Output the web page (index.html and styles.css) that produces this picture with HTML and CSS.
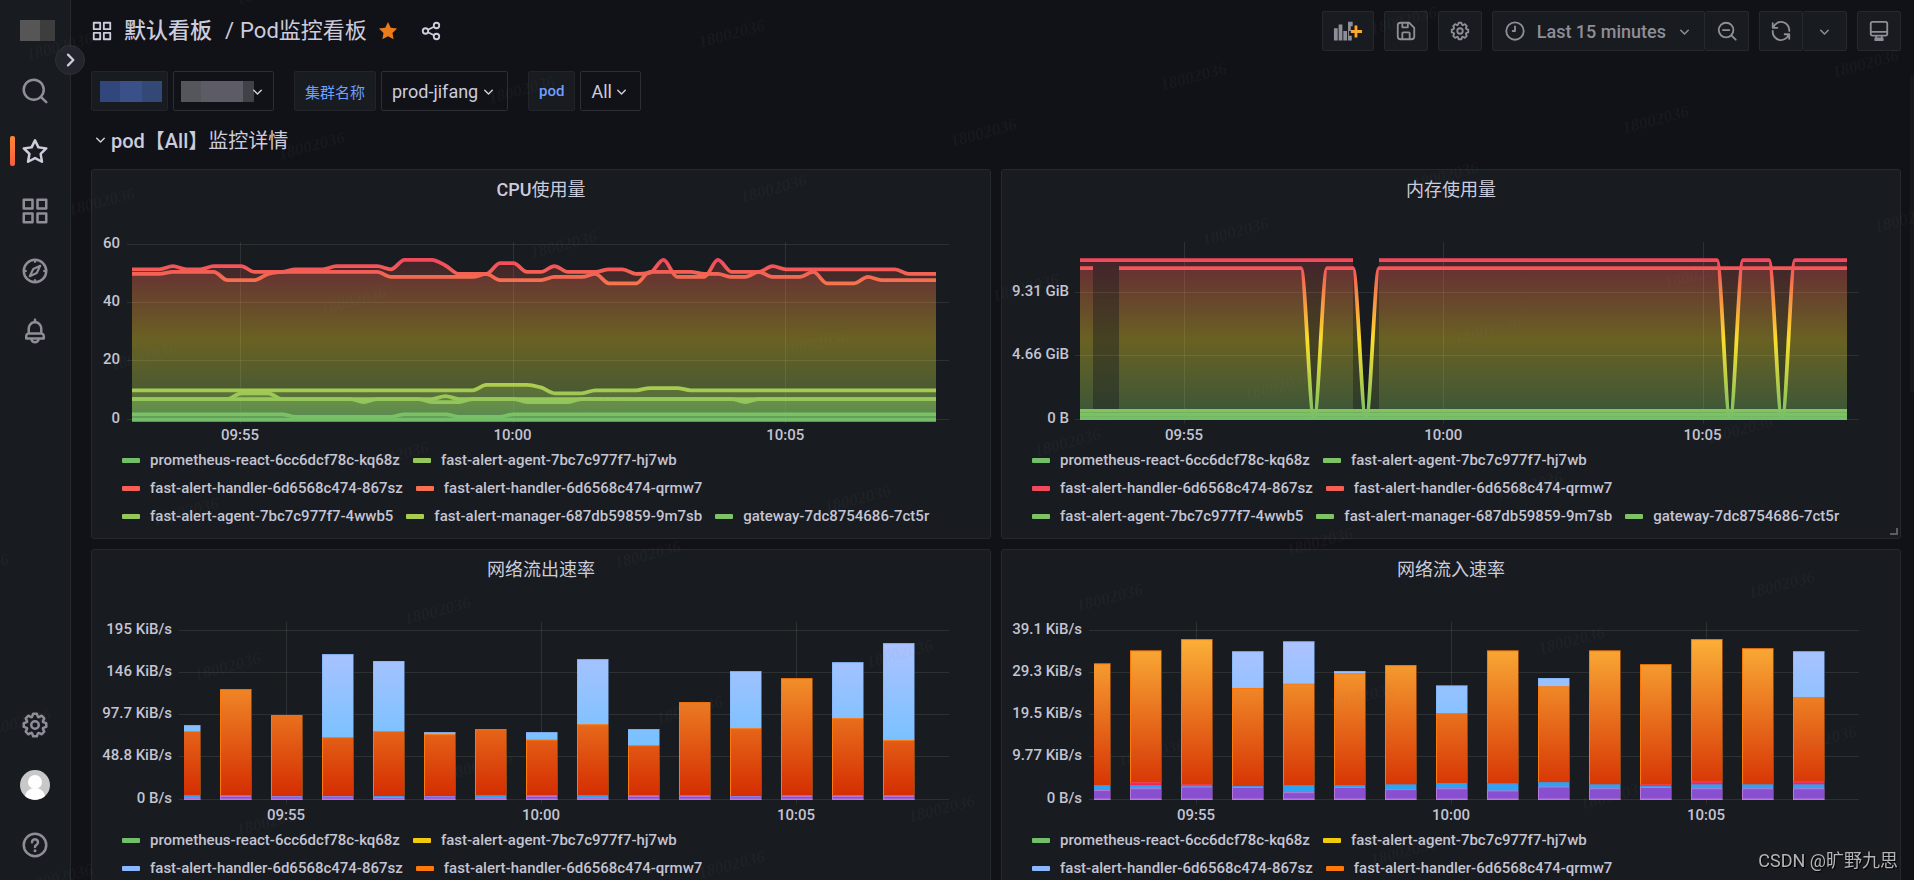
FILE: index.html
```html
<!DOCTYPE html>
<html lang="zh-CN">
<head>
<meta charset="utf-8">
<title>Pod监控看板</title>
<link rel="stylesheet" href="styles.css">
</head>
<body>
<svg class="sprite" aria-hidden="true">
  <symbol id="i-search" viewBox="0 0 24 24"><path d="M21.71,20.29,18,16.61A9,9,0,1,0,16.61,18l3.68,3.68a1,1,0,0,0,1.42,0A1,1,0,0,0,21.71,20.29ZM11,18a7,7,0,1,1,7-7A7,7,0,0,1,11,18Z"/></symbol>
  <symbol id="i-star" viewBox="0 0 24 24"><path d="M22,9.67A1,1,0,0,0,21.14,9l-5.69-.83L12.9,3a1,1,0,0,0-1.8,0L8.55,8.16,2.86,9a1,1,0,0,0-.81.68,1,1,0,0,0,.25,1l4.13,4-1,5.68A1,1,0,0,0,6.9,21.44L12,18.77l5.1,2.67a.93.93,0,0,0,.46.12,1,1,0,0,0,.59-.19,1,1,0,0,0,.4-1l-1-5.68,4.13-4A1,1,0,0,0,22,9.67Zm-6.15,4a1,1,0,0,0-.29.88l.72,4.2-3.76-2a1.06,1.06,0,0,0-.94,0l-3.76,2,.72-4.2a1,1,0,0,0-.29-.88l-3-3,4.21-.61a1,1,0,0,0,.76-.55L12,5.7l1.88,3.82a1,1,0,0,0,.76.55l4.21.61Z"/></symbol>
  <symbol id="i-star-full" viewBox="0 0 24 24"><path d="M12 2.2l3 6.2 6.9 1-5 4.8 1.2 6.9-6.1-3.3-6.1 3.3 1.2-6.9-5-4.8 6.9-1z"/></symbol>
  <symbol id="i-apps" viewBox="0 0 24 24"><path d="M10,13H3a1,1,0,0,0-1,1v7a1,1,0,0,0,1,1h7a1,1,0,0,0,1-1V14A1,1,0,0,0,10,13ZM9,20H4V15H9ZM21,2H14a1,1,0,0,0-1,1v7a1,1,0,0,0,1,1h7a1,1,0,0,0,1-1V3A1,1,0,0,0,21,2ZM20,9H15V4h5Zm1,4H14a1,1,0,0,0-1,1v7a1,1,0,0,0,1,1h7a1,1,0,0,0,1-1V14A1,1,0,0,0,21,13Zm-1,7H15V15h5ZM10,2H3A1,1,0,0,0,2,3v7a1,1,0,0,0,1,1h7a1,1,0,0,0,1-1V3A1,1,0,0,0,10,2ZM9,9H4V4H9Z"/></symbol>
  <symbol id="i-compass" viewBox="0 0 24 24"><g fill="none" stroke="currentColor" stroke-width="2" stroke-linejoin="round"><circle cx="12" cy="12" r="9"/><path d="M12 3v2.4M12 18.6V21M3 12h2.4M18.6 12H21M16.2 7.8l-5.6 2.6-2.8 5.8 5.6-2.6z" stroke-width="1.7"/></g></symbol>
  <symbol id="i-bell" viewBox="0 0 24 24"><path d="M18,13.18V10a6,6,0,0,0-5-5.91V3a1,1,0,0,0-2,0V4.09A6,6,0,0,0,6,10v3.18A3,3,0,0,0,4,16v2a1,1,0,0,0,1,1H8.14a4,4,0,0,0,7.72,0H19a1,1,0,0,0,1-1V16A3,3,0,0,0,18,13.18ZM8,10a4,4,0,0,1,8,0v3H8Zm4,10a2,2,0,0,1-1.72-1h3.44A2,2,0,0,1,12,20Zm6-3H6V16a1,1,0,0,1,1-1H17a1,1,0,0,1,1,1Z"/></symbol>
  <symbol id="i-cog" viewBox="0 0 24 24"><path d="M21.32,9.55l-1.89-.63.89-1.78A1,1,0,0,0,20.13,6L18,3.87a1,1,0,0,0-1.15-.19l-1.78.89-.63-1.89A1,1,0,0,0,13.5,2h-3a1,1,0,0,0-.95.68L8.92,4.57,7.14,3.68A1,1,0,0,0,6,3.87L3.87,6a1,1,0,0,0-.19,1.15l.89,1.78-1.89.63A1,1,0,0,0,2,10.5v3a1,1,0,0,0,.68.95l1.89.63-.89,1.78A1,1,0,0,0,3.87,18L6,20.13a1,1,0,0,0,1.15.19l1.78-.89.63,1.89a1,1,0,0,0,.95.68h3a1,1,0,0,0,.95-.68l.63-1.89,1.78.89A1,1,0,0,0,18,20.13L20.13,18a1,1,0,0,0,.19-1.15l-.89-1.78,1.89-.63A1,1,0,0,0,22,13.5v-3A1,1,0,0,0,21.32,9.55ZM20,12.78l-1.2.4A2,2,0,0,0,17.64,16l.57,1.14-1.1,1.1L16,17.64a2,2,0,0,0-2.79,1.16l-.4,1.2H11.22l-.4-1.2A2,2,0,0,0,8,17.64l-1.14.57-1.1-1.1L6.36,16A2,2,0,0,0,5.2,13.18L4,12.78V11.22l1.2-.4A2,2,0,0,0,6.36,8L5.79,6.89l1.1-1.1L8,6.36A2,2,0,0,0,10.82,5.2l.4-1.2h1.56l.4,1.2A2,2,0,0,0,16,6.36l1.14-.57,1.1,1.1L17.64,8a2,2,0,0,0,1.16,2.79l1.2.4ZM12,8a4,4,0,1,0,4,4A4,4,0,0,0,12,8Zm0,6a2,2,0,1,1,2-2A2,2,0,0,1,12,14Z"/></symbol>
  <symbol id="i-help" viewBox="0 0 24 24"><g fill="none" stroke="currentColor" stroke-width="2" stroke-linecap="round"><circle cx="12" cy="12" r="9"/><path d="M9.6 9.8a2.4 2.4 0 1 1 3.6 2.1c-.8.4-1.2.9-1.2 1.6"/></g><circle cx="12" cy="16.6" r="1.2"/></symbol>
  <symbol id="i-share" viewBox="0 0 24 24"><g fill="none" stroke="currentColor" stroke-width="2"><circle cx="6" cy="12" r="3"/><circle cx="18" cy="6" r="3"/><circle cx="18" cy="18" r="3"/><path d="M8.7 10.7l6.6-3.4M8.7 13.3l6.6 3.4"/></g></symbol>
  <symbol id="i-down" viewBox="0 0 24 24"><path d="M6 10l6 6 6-6" fill="none" stroke="currentColor" stroke-width="2.4" stroke-linecap="round" stroke-linejoin="round"/></symbol>
  <symbol id="i-right" viewBox="0 0 24 24"><path d="M9 4l8 8-8 8" fill="none" stroke="currentColor" stroke-width="3.4" stroke-linecap="round" stroke-linejoin="round"/></symbol>
  <symbol id="i-add-panel" viewBox="0 0 32 24"><path d="M1 9h4v13H1zM6 5h4v17H6zM11 12h4v10h-4zM16 2h5v5h-2v5h-2v5h3v5h-4z"/><path d="M23 6h3v5h5v3h-5v5h-3v-5h-4v-3h4z" fill="#ffa62b"/></symbol>
  <symbol id="i-save" viewBox="0 0 24 24"><g fill="none" stroke="currentColor" stroke-width="2" stroke-linejoin="round"><path d="M3 6a3 3 0 0 1 3-3h9.5L21 8.500V18a3 3 0 0 1-3 3H6a3 3 0 0 1-3-3zM8 3v5h6V3M8 21v-6.500a1 1 0 0 1 1-1h6a1 1 0 0 1 1 1V21"/></g></symbol>
  <symbol id="i-clock" viewBox="0 0 24 24"><g fill="none" stroke="currentColor" stroke-width="2" stroke-linecap="round" stroke-linejoin="round"><circle cx="12" cy="12" r="9.500"/><path d="M12 7v5H9.500"/></g></symbol>
  <symbol id="i-zoom-out" viewBox="0 0 24 24"><g fill="none" stroke="currentColor" stroke-width="2" stroke-linecap="round"><circle cx="11" cy="11" r="8"/><path d="M17 17l4.500 4.500M7.500 11h7"/></g></symbol>
  <symbol id="i-sync" viewBox="0 0 24 24"><g fill="none" stroke="currentColor" stroke-width="2" stroke-linecap="round" stroke-linejoin="round"><path d="M3 3.500v5h5M3.600 8a9 9 0 0 1 17.400 4M21 20.500v-5h-5M20.400 16A9 9 0 0 1 3 12"/></g></symbol>
  <symbol id="i-monitor" viewBox="0 0 24 24"><g fill="none" stroke="currentColor" stroke-width="2" stroke-linejoin="round"><rect x="3" y="2" width="18" height="15" rx="2"/><path d="M3 13h18M9 17v2M15 17v2M8 20h8v2H8z"/></g></symbol>
</svg>

<div class="app">
  <nav class="sidebar" aria-label="主导航">
    <div class="side-group">
      <a class="logo" href="#" aria-label="首页"></a>
      <a class="side-item" href="#" aria-label="搜索"><svg><use href="#i-search"/></svg></a>
      <a class="side-item active" href="#" aria-label="收藏"><svg><use href="#i-star"/></svg></a>
      <a class="side-item" href="#" aria-label="看板"><svg><use href="#i-apps"/></svg></a>
      <a class="side-item" href="#" aria-label="探索"><svg><use href="#i-compass"/></svg></a>
      <a class="side-item" href="#" aria-label="告警"><svg><use href="#i-bell"/></svg></a>
    </div>
    <div class="side-group">
      <a class="side-item" href="#" aria-label="设置"><svg><use href="#i-cog"/></svg></a>
      <a class="side-item" href="#" aria-label="用户"><svg class="avatar" viewBox="0 0 30 30"><circle cx="15" cy="15" r="15" fill="#c8c8c8"/><circle cx="15" cy="12" r="7" fill="#fff"/><path d="M5 26c1-5 5-8 10-8s9 3 10 8a15 15 0 0 1-20 0z" fill="#fff"/></svg></a>
      <a class="side-item" href="#" aria-label="帮助"><svg><use href="#i-help"/></svg></a>
    </div>
    <button class="side-toggle" aria-label="展开菜单"><svg><use href="#i-right"/></svg></button>
  </nav>

  <main class="main">
    <header class="navbar">
      <div class="crumbs">
        <svg class="icon"><use href="#i-apps"/></svg>
        <h1 class="title"><a class="folder" href="#">默认看板</a><span class="slash">/</span><a href="#">Pod监控看板</a></h1>
        <button class="plain starred" aria-label="取消收藏"><svg><use href="#i-star-full"/></svg></button>
        <button class="plain" aria-label="分享"><svg class="icon"><use href="#i-share"/></svg></button>
      </div>
      <div class="toolbar">
        <button class="tool wide" aria-label="添加面板"><svg class="add-icon"><use href="#i-add-panel"/></svg></button>
        <button class="tool" aria-label="保存"><svg class="icon"><use href="#i-save"/></svg></button>
        <button class="tool" aria-label="看板设置"><svg class="icon"><use href="#i-cog"/></svg></button>
        <div class="tool-group">
          <button class="tool time"><svg class="icon"><use href="#i-clock"/></svg><span>Last 15 minutes</span><svg class="chevron"><use href="#i-down"/></svg></button>
          <button class="tool" aria-label="缩小时间范围"><svg class="icon"><use href="#i-zoom-out"/></svg></button>
        </div>
        <div class="tool-group">
          <button class="tool" aria-label="刷新"><svg class="icon"><use href="#i-sync"/></svg></button>
          <button class="tool" aria-label="刷新间隔"><svg class="chevron"><use href="#i-down"/></svg></button>
        </div>
        <button class="tool" aria-label="电视模式"><svg class="icon"><use href="#i-monitor"/></svg></button>
      </div>
    </header>

    <div class="variables">
      <div class="variable">
        <span class="var-label"><span class="mask mask-blue"></span></span>
        <button class="var-masked" aria-label="变量"><span class="mask mask-gray"></span><svg class="chevron"><use href="#i-down"/></svg></button>
      </div>
      <div class="variable">
        <label class="var-label cjk" for="v-cluster">集群名称</label>
        <div class="var-select"><select id="v-cluster"><option>prod-jifang</option></select><svg class="chevron"><use href="#i-down"/></svg></div>
      </div>
      <div class="variable">
        <label class="var-label" for="v-pod">pod</label>
        <div class="var-select"><select id="v-pod"><option>All</option></select><svg class="chevron"><use href="#i-down"/></svg></div>
      </div>
    </div>

    <button class="row-title"><svg class="chevron"><use href="#i-down"/></svg><span>pod【All】<span class="cjk">监控详情</span></span></button>

    <div class="panels">
      <section class="panel">
        <h2>CPU<span class="cjk">使用量</span></h2>
        <div class="chart" data-chart="cpu"></div>
        <ul class="legend">
          <li><i class="c-green"></i>prometheus-react-6cc6dcf78c-kq68z</li>
          <li><i class="c-lime"></i>fast-alert-agent-7bc7c977f7-hj7wb</li>
          <li><i class="c-red"></i>fast-alert-handler-6d6568c474-867sz</li>
          <li><i class="c-coral"></i>fast-alert-handler-6d6568c474-qrmw7</li>
          <li><i class="c-lime"></i>fast-alert-agent-7bc7c977f7-4wwb5</li>
          <li><i class="c-olive"></i>fast-alert-manager-687db59859-9m7sb</li>
          <li><i class="c-leaf"></i>gateway-7dc8754686-7ct5r</li>
        </ul>
      </section>
      <section class="panel">
        <h2 class="cjk">内存使用量</h2>
        <div class="chart" data-chart="memory"></div>
        <ul class="legend">
          <li><i class="c-green"></i>prometheus-react-6cc6dcf78c-kq68z</li>
          <li><i class="c-leaf"></i>fast-alert-agent-7bc7c977f7-hj7wb</li>
          <li><i class="c-rose"></i>fast-alert-handler-6d6568c474-867sz</li>
          <li><i class="c-red"></i>fast-alert-handler-6d6568c474-qrmw7</li>
          <li><i class="c-leaf"></i>fast-alert-agent-7bc7c977f7-4wwb5</li>
          <li><i class="c-leaf"></i>fast-alert-manager-687db59859-9m7sb</li>
          <li><i class="c-leaf"></i>gateway-7dc8754686-7ct5r</li>
        </ul>
        <span class="resize"></span>
      </section>
      <section class="panel">
        <h2 class="cjk">网络流出速率</h2>
        <div class="chart" data-chart="netOut"></div>
        <ul class="legend">
          <li><i class="c-green"></i>prometheus-react-6cc6dcf78c-kq68z</li>
          <li><i class="c-yellow"></i>fast-alert-agent-7bc7c977f7-hj7wb</li>
          <li><i class="c-blue"></i>fast-alert-handler-6d6568c474-867sz</li>
          <li><i class="c-orange"></i>fast-alert-handler-6d6568c474-qrmw7</li>
        </ul>
      </section>
      <section class="panel">
        <h2 class="cjk">网络流入速率</h2>
        <div class="chart" data-chart="netIn"></div>
        <ul class="legend">
          <li><i class="c-green"></i>prometheus-react-6cc6dcf78c-kq68z</li>
          <li><i class="c-yellow"></i>fast-alert-agent-7bc7c977f7-hj7wb</li>
          <li><i class="c-blue"></i>fast-alert-handler-6d6568c474-867sz</li>
          <li><i class="c-orange"></i>fast-alert-handler-6d6568c474-qrmw7</li>
        </ul>
      </section>
    </div>
  </main>
</div>
<div class="scroll-thumb"></div>
<svg class="user-marks" aria-hidden="true"></svg>
<div class="credit">CSDN @旷野九思</div>
<script src="charts.js"></script>
</body>
</html>
```

FILE: styles.css
```css
* { box-sizing: border-box; }

body {
  margin: 0;
  height: 100vh;
  overflow: hidden;
  background: #111217;
  color: #ccccdc;
  font-family: Roboto, "Noto Sans CJK SC", sans-serif;
  font-size: 15px;
}

a { color: inherit; text-decoration: none; }
button, select { font: inherit; color: inherit; cursor: pointer; }
svg { fill: currentColor; display: block; }
.sprite { display: none; }
.icon { width: 22px; height: 22px; }
.chevron { width: 15px; height: 15px; }

.app { display: flex; height: 100vh; }

/* sidebar */
.sidebar {
  position: relative;
  flex: none;
  width: 71px;
  display: flex;
  flex-direction: column;
  justify-content: space-between;
  padding: 20px 0 5px;
  background: #181b1f;
  border-right: 1px solid #26282d;
  color: #8e8e99;
}
.side-group { display: flex; flex-direction: column; }
.logo {
  width: 35px;
  height: 21px;
  margin: 0 0 20px 20px;
  background: linear-gradient(90deg, #565656 20px, #3d3d3e 20px);
}
.side-item {
  position: relative;
  height: 60px;
  display: flex;
  align-items: center;
  justify-content: center;
}
.side-item svg { width: 30px; height: 30px; }
.side-item.active { color: #ccccdc; }
.side-item.active::before {
  content: "";
  position: absolute;
  left: 10px;
  top: 15px;
  width: 5px;
  height: 30px;
  border-radius: 2px;
  background: linear-gradient(#ff8833, #f55f3e);
}
.side-toggle {
  position: absolute;
  z-index: 2;
  right: -15px;
  top: 45px;
  width: 30px;
  height: 30px;
  padding: 0;
  border: 1px solid #2d3036;
  border-radius: 50%;
  background: #22252b;
  color: #ccccdc;
  display: flex;
  align-items: center;
  justify-content: center;
}
.side-toggle svg { width: 16px; height: 16px; }

/* header */
.main { flex: 1; min-width: 0; padding: 0 13px 0 20px; }
.navbar {
  display: flex;
  align-items: center;
  justify-content: space-between;
  height: 62px;
}
.crumbs { display: flex; align-items: center; }
.title {
  display: flex;
  margin: 0 10px 0 11px;
  font-size: 22px;
  line-height: 30px;
  font-weight: 400;
}
.folder { font-weight: 500; }
.slash { margin: 0 6px 0 13px; }
.plain {
  padding: 0;
  border: 0;
  background: none;
  margin-right: 21px;
}
.starred { color: #eb7b18; }
.starred svg { width: 22px; height: 22px; }

.toolbar { display: flex; gap: 10px; color: #8e8e99; }
.tool {
  min-width: 44px;
  height: 40px;
  padding: 0 10px;
  display: flex;
  align-items: center;
  justify-content: center;
  background: #181b1f;
  border: 1px solid #26282d;
  border-radius: 2px;
}
.tool.wide { width: 52px; }
.add-icon { width: 32px; height: 24px; }
.tool-group { display: flex; }
.tool-group .tool + .tool { border-left: 0; }
.tool.time {
  gap: 11px;
  padding: 0 12px 0 11px;
  font-size: 18px;
  font-weight: 500;
}

/* template variables */
.variables { display: flex; gap: 20px; padding-top: 9px; }
.variable { display: flex; gap: 5px; }
.var-label {
  height: 40px;
  padding: 0 10px;
  display: flex;
  align-items: center;
  background: #181b1f;
  border: 1px solid #222429;
  border-radius: 2px;
  color: #6e9fff;
  font-size: 15px;
  font-weight: 500;
}
.var-select, .var-masked {
  position: relative;
  height: 40px;
  display: flex;
  align-items: center;
  background: #111217;
  border: 1px solid #2d2e34;
  border-radius: 2px;
}
.var-select select {
  appearance: none;
  height: 38px;
  padding: 0 28px 0 10px;
  border: 0;
  background: none;
  font-size: 18px;
}
.var-select .chevron {
  position: absolute;
  right: 11px;
  pointer-events: none;
}
.var-masked { padding: 0 8px 0 7px; }
.mask { height: 21px; }
.mask-blue {
  width: 62px;
  margin: 0 -5px 0 -2px;
  background: linear-gradient(90deg, #31467a 20px, #3a5088 20px, #3a5088 42px, #344878 42px);
}
.mask-gray {
  width: 73px;
  background: linear-gradient(90deg, #55555c 20px, #5c5b66 20px, #5c5b66 62px, #414148 62px);
}
.var-masked .chevron { margin-left: -4px; }

.row-title {
  display: flex;
  align-items: center;
  gap: 3px;
  height: 58px;
  padding: 0 0 2px 2px;
  border: 0;
  background: none;
  font-size: 20px;
  font-weight: 500;
}

/* Chinese glyphs keep the regular weight next to medium Latin text */
.cjk, .panel h2.cjk { font-weight: 400; }

/* panels */
.panels { display: grid; grid-template-columns: 1fr 1fr; gap: 10px; }
.panel {
  position: relative;
  min-width: 0;
  height: 370px;
  background: #181b1f;
  border: 1px solid #26282d;
  border-radius: 3px;
}
.panel h2 {
  margin: 0;
  line-height: 40px;
  font-size: 18px;
  font-weight: 500;
  text-align: center;
}
.chart { height: 236px; }
.chart svg { width: 100%; height: 236px; }
.chart text { font-size: 15px; font-weight: 500; fill: #c4c4d3; }
.legend {
  display: flex;
  flex-wrap: wrap;
  column-gap: 13px;
  margin: 0;
  padding: 0 40px 0 30px;
  list-style: none;
}
.legend li {
  display: flex;
  align-items: center;
  gap: 10px;
  height: 28px;
  font-size: 15px;
  font-weight: 500;
  color: #c4c4d3;
}
.legend i { width: 18px; height: 5px; border-radius: 1px; }
.c-green { background: #73bf69; }
.c-leaf { background: #7dc264; }
.c-lime { background: #96c75b; }
.c-olive { background: #a6cc50; }
.c-red { background: #f55f55; }
.c-rose { background: #f2495c; }
.c-coral { background: #f7704f; }
.c-yellow { background: #f2cc0c; }
.c-blue { background: #8ab8ff; }
.c-orange { background: #ff780a; }

.resize {
  position: absolute;
  right: 2px;
  bottom: 3px;
  width: 8px;
  height: 7px;
  border: solid #5c5d62;
  border-width: 0 2px 2px 0;
}

/* overlays */
.scroll-thumb {
  position: fixed;
  right: 0;
  top: 75px;
  width: 4px;
  height: 318px;
  border-radius: 3px;
  background: #17181d;
}
.user-marks {
  position: fixed;
  inset: 0;
  z-index: 3;
  width: 100%;
  height: 100%;
  pointer-events: none;
}
.user-marks text {
  font-family: "Liberation Serif", serif;
  font-size: 17px;
  font-style: italic;
  font-weight: 700;
  text-anchor: middle;
  fill: #82828c;
  fill-opacity: 0.06;
}
.credit {
  position: fixed;
  right: 16px;
  bottom: 6px;
  z-index: 4;
  font-size: 18px;
  line-height: 26px;
  color: #b4b4b6;
  text-shadow: 1px 1px 1px #000;
}
```

FILE: charts.js
```js
// Expands [[from, to, value], ...] runs into one value per 15s sample; gaps stay null.
const runs = (list, base = null) => {
  const out = Array(60).fill(base);
  list.forEach(([a, b, v]) => { for (let i = a; i <= b; i++) out[i] = v; });
  return out;
};

const charts = {
  cpu: {
    type: 'line', left: 40, labelX: 28, samplesEnd: 844, firstTick: 148, tickStep: 272.6,
    max: 60, topY: 34, peak: 54.7, spill: 2,
    ticks: [[0, '0'], [20, '20'], [40, '40'], [60, '60']],
    series: [
      runs([[3, 3, 52.6], [6, 8, 52.6], [9, 11, 50.6], [15, 18, 52.6], [20, 22, 54.7], [23, 23, 52.8], [24, 26, 49.9], [27, 28, 53.6], [29, 30, 50.6], [31, 31, 52.6], [32, 34, 50.6], [37, 37, 49.9], [38, 38, 50.3], [39, 39, 54.7], [40, 42, 48.9], [43, 43, 54.7], [44, 46, 50.6], [47, 47, 52.6], [57, 59, 49.9]], 51.5),
      runs([[0, 2, 49.9], [7, 9, 47.8], [10, 10, 49.9], [19, 25, 48.9], [26, 26, 49.9], [27, 30, 47.8], [31, 33, 48.9], [34, 34, 49.9], [35, 37, 46.7], [42, 43, 49.9], [44, 45, 48.9], [47, 49, 48.9], [51, 53, 46.7], [54, 54, 48.9], [55, 59, 47.8]], 50.6),
      runs([[26, 29, 11.9], [30, 30, 11], [31, 33, 9], [38, 40, 10.8]], 10),
      runs([[8, 10, 9], [23, 23, 8]], 7),
      runs([[17, 17, 6], [22, 24, 6], [29, 32, 6], [45, 45, 6]], 7),
      runs([[12, 19, 0.9], [24, 27, 0.9]], 1.8),
      runs([], 0)
    ]
  },
  memory: {
    type: 'line', left: 78, labelX: 67, samplesEnd: 845, firstTick: 182, tickStep: 259.3,
    max: 9.31, topY: 82, peak: 11.66, spill: 0,
    ticks: [[0, '0 B'], [4.66, '4.66 GiB'], [9.31, '9.31 GiB']],
    series: [
      runs([[22, 22, null], [50, 50, 0], [54, 54, 0]], 11.68),
      runs([[2, 2, null], [18, 18, 0], [22, 22, 0]], 11.1),
      runs([], 0.64),
      runs([], 0.36),
      runs([], 0.1)
    ]
  },
  netOut: {
    type: 'bar', left: 92, labelX: 80, firstTick: 194, tickStep: 255, max: 195.3, topY: 40,
    ticks: [[0, '0 B/s'], [48.8, '48.8 KiB/s'], [97.7, '97.7 KiB/s'], [146.5, '146 KiB/s'], [195.3, '195 KiB/s']],
    // purple, azure, red, orange, blue
    bars: [[2.6, 5, 0, 79, 85.9], [4, 5, 0, 127.5, 0], [3.6, 4, 0, 97.5, 0], [3.6, 4, 0, 72, 168], [2.8, 4, 0, 79, 160], [3.6, 4, 0, 75.5, 77.8], [2.6, 5, 0, 81.3, 0], [4, 5, 0, 69.3, 77.8], [2.6, 5, 0, 87, 162.2], [4, 5, 0, 62.8, 81.3], [4, 5, 0, 112.5, 0], [3.6, 4, 0, 82.4, 148.3], [4, 5, 0, 140.2, 0], [4, 5, 0, 94, 158.7], [4, 5, 0, 68.6, 180.7]]
  },
  netIn: {
    type: 'bar', left: 92, labelX: 80, firstTick: 194, tickStep: 255, max: 39.1, topY: 40,
    ticks: [[0, '0 B/s'], [9.77, '9.77 KiB/s'], [19.5, '19.5 KiB/s'], [29.3, '29.3 KiB/s'], [39.1, '39.1 KiB/s']],
    bars: [[2.2, 3.3, 0, 31.5, 0], [2.6, 3.3, 4, 34.5, 0], [3, 3.2, 3.5, 37.1, 0], [2.9, 3.1, 0, 25.8, 34.3], [1.7, 3.3, 0, 26.8, 36.6], [2.9, 3.3, 0, 29.2, 29.7], [2.4, 3.5, 0, 31.1, 0], [2.6, 3.8, 0, 20, 26.4], [2.1, 3.6, 3.8, 34.5, 0], [3, 4, 0, 26.2, 28.1], [2.6, 3.5, 0, 34.5, 0], [2.9, 3.1, 3.5, 31.3, 0], [2.6, 3.5, 4.2, 37.1, 0], [2.6, 3.5, 0, 35, 0], [2.6, 3.5, 4.2, 23.7, 34.3]]
  }
};

const BASE_W = 898, RIGHT = 857, ZERO = 209.5, GRID_TOP = 32;
const barStyles = [
  ['#884fd0', '#b877d9'], ['#2ea3ef', '#3f9bee'], ['#f0245f', '#f2495c'],
  ['url(#warm)', '#ff780a'], ['url(#cool)', '#8ab8ff']
];

// Monotone cubic path through the points.
function spline(p) {
  const n = p.length, s = [], m = [];
  for (let i = 0; i < n - 1; i++) s[i] = (p[i + 1][1] - p[i][1]) / (p[i + 1][0] - p[i][0]);
  m[0] = s[0]; m[n - 1] = s[n - 2];
  for (let i = 1; i < n - 1; i++) m[i] = s[i - 1] * s[i] <= 0 ? 0 : 2 * s[i - 1] * s[i] / (s[i - 1] + s[i]);
  let d = `M${p[0][0]} ${p[0][1]}`;
  for (let i = 0; i < n - 1; i++) {
    const h = (p[i + 1][0] - p[i][0]) / 3;
    d += `C${p[i][0] + h} ${p[i][1] + m[i] * h} ${p[i + 1][0] - h} ${p[i + 1][1] - m[i + 1] * h} ${p[i + 1][0]} ${p[i + 1][1]}`;
  }
  return d;
}

function draw(el) {
  const name = el.dataset.chart, c = charts[name], w = el.clientWidth;
  const k = (w - (BASE_W - RIGHT) - c.left) / (RIGHT - c.left);
  const X = x => c.left + (x - c.left) * k;
  const Y = v => ZERO - v * (ZERO - c.topY - 0.5) / c.max;
  const right = X(RIGHT);
  let marks = '', defs = '';

  if (c.type === 'line') {
    const stops = '<stop offset="0" stop-color="#73bf69"/><stop offset=".5" stop-color="#fade2a"/><stop offset="1" stop-color="#f2495c"/>';
    defs = `<linearGradient id="g-${name}" gradientUnits="userSpaceOnUse" x1="0" x2="0" y1="${Y(0)}" y2="${Y(c.peak)}">${stops}</linearGradient>
      <clipPath id="clip-${name}"><rect x="${c.left}" y="0" width="${X(c.samplesEnd) - c.left}" height="${ZERO + 0.5 + c.spill}"/></clipPath>`;
    const paint = `url(#g-${name})`;
    let fills = '', lines = '';
    c.series.forEach(vals => {
      let seg = [];
      const flush = () => {
        if (seg.length > 1) {
          const d = spline(seg), b = ZERO + c.spill;
          fills += `<path d="${d}L${seg[seg.length - 1][0]} ${b}L${seg[0][0]} ${b}Z" fill="${paint}" fill-opacity=".2"/>`;
          lines += `<path d="${d}" fill="none" stroke="${paint}" stroke-width="3.75"/>`;
        }
        seg = [];
      };
      vals.forEach((v, i) => v === null ? flush() : seg.push([X(c.left + i * (c.samplesEnd - c.left) / 59), Y(v)]));
      flush();
    });
    marks = `<g clip-path="url(#clip-${name})">${fills}${lines}</g>`;
  } else {
    defs = `<linearGradient id="warm" gradientUnits="userSpaceOnUse" x1="0" x2="0" y1="${ZERO}" y2="${GRID_TOP}"><stop offset="0" stop-color="#d42a00"/><stop offset="1" stop-color="#ffbe3e"/></linearGradient>
      <linearGradient id="cool" gradientUnits="userSpaceOnUse" x1="0" x2="0" y1="${ZERO}" y2="${GRID_TOP}"><stop offset="0" stop-color="#5cc0ff"/><stop offset="1" stop-color="#b7c3ff"/></linearGradient>
      <clipPath id="clip-${name}"><rect x="${c.left}" y="0" width="${w}" height="${ZERO + 1}"/></clipPath>`;
    c.bars.forEach((bar, i) => {
      const bw = 32 * k, x = X(c.firstTick - 102 + i * c.tickStep / 5) - 15 * k;
      for (let s = 4; s >= 0; s--) {
        if (!bar[s]) continue;
        const y = Y(bar[s]);
        marks += `<rect x="${x + 0.5}" y="${y + 0.5}" width="${bw - 1}" height="${Math.max(1, ZERO - y - 1)}" fill="${barStyles[s][0]}" stroke="${barStyles[s][1]}"/>`;
      }
      marks += `<rect x="${x}" y="${ZERO - 0.5}" width="${bw}" height="1" fill="#8f9f80"/>`;
      marks += `<rect x="${x + bw - 1}" y="${Y(Math.max(...bar))}" width="1" height="${ZERO - Y(Math.max(...bar))}" fill="#181b1f" fill-opacity=".5"/>`;
    });
    marks = `<g clip-path="url(#clip-${name})">${marks}</g>`;
  }

  let grid = '', labels = '';
  c.ticks.forEach(([v, t]) => {
    const y = Math.floor(Y(v) - 0.49);
    grid += `<rect x="${c.left - 5}" y="${y}" width="${right - c.left + 5}" height="1"/>`;
    labels += `<text x="${c.labelX}" y="${y + 4}" text-anchor="end">${t}</text>`;
  });
  ['09:55', '10:00', '10:05'].forEach((t, i) => {
    const x = X(c.firstTick + i * c.tickStep);
    grid += `<rect x="${Math.round(x)}" y="${GRID_TOP}" width="1" height="${ZERO + 4 - GRID_TOP}"/>`;
    labels += `<text x="${x}" y="230" text-anchor="middle">${t}</text>`;
  });
  el.innerHTML = `<svg><defs>${defs}</defs><g fill="#f0fae6" fill-opacity=".1">${grid}</g>${marks}${labels}</svg>`;
}

function drawMarks() {
  let out = '';
  for (let a = -6; a <= 12; a++) {
    for (let b = -6; b <= 12; b++) {
      const x = 355 + 210 * a + 42 * b, y = 306 - 56 * a + 155 * b;
      if (x < -40 || x > innerWidth + 40 || y < -20 || y > innerHeight + 20) continue;
      out += `<text transform="translate(${x} ${y}) rotate(-15)">18002036</text>`;
    }
  }
  document.querySelector('.user-marks').innerHTML = out;
}

function render() {
  document.querySelectorAll('.chart').forEach(draw);
  drawMarks();
}
render();
addEventListener('resize', render);
```
